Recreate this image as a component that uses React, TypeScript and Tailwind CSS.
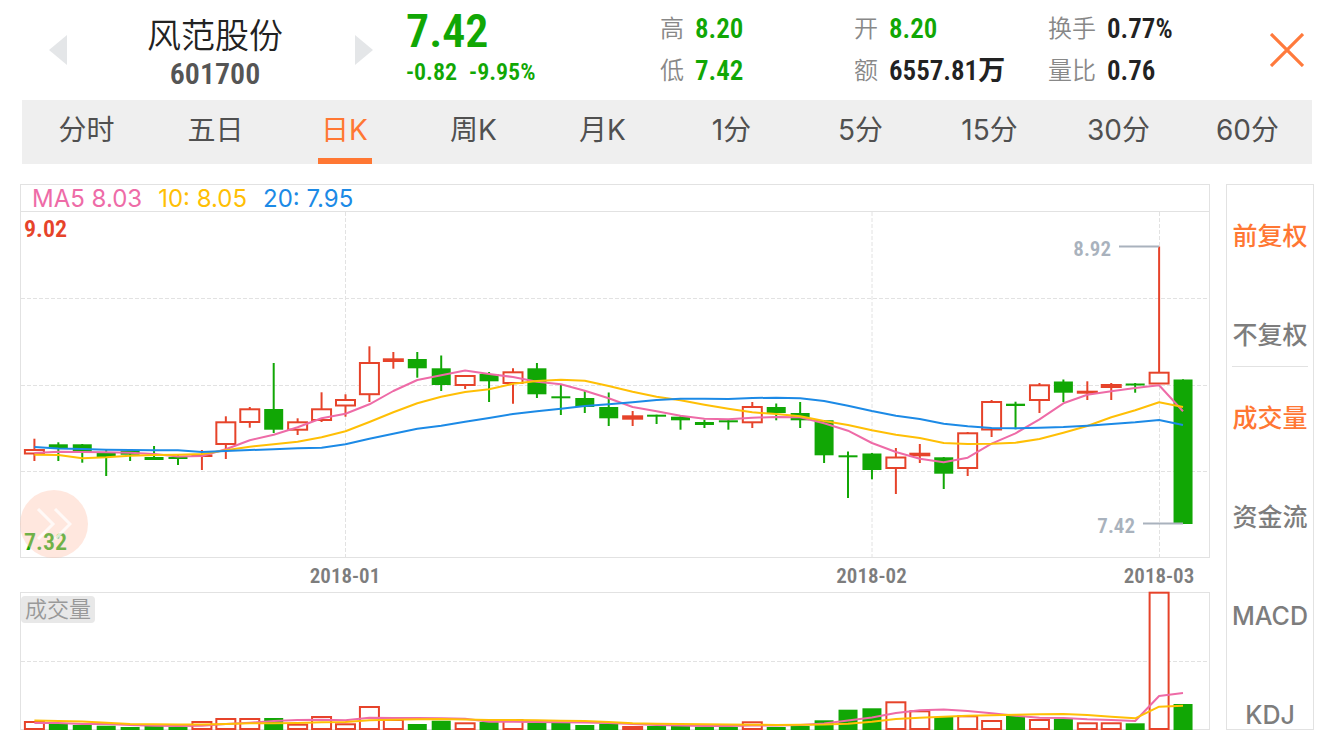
import { Fragment } from 'react';

type Kind = 'up' | 'down';

// kind, body top, body bottom, high, low, volume top
type Candle = [Kind, number, number, number, number, number];

const candles: Candle[] = [
  ['up', 449, 454.5, 438.7, 461, 721],
  ['down', 444.3, 448.3, 442.3, 461, 723.7],
  ['down', 444.3, 453, 444, 462.7, 725],
  ['down', 453, 457, 450, 476, 725.7],
  ['down', 450.7, 454.7, 450.7, 461, 727],
  ['down', 457, 460, 446, 460, 726],
  ['down', 457, 459, 455, 465, 727],
  ['up', 454.4, 457, 450, 470, 721],
  ['up', 421.3, 445, 416.3, 459, 718],
  ['up', 408.3, 423, 407, 427.7, 718],
  ['down', 409, 429.7, 363, 433, 718],
  ['up', 421.3, 430.7, 418.3, 435, 723.7],
  ['up', 408.3, 421, 392.3, 422, 716],
  ['up', 399, 406.5, 394.3, 416.7, 723.3],
  ['up', 362, 395.2, 346.3, 402, 706],
  ['up', 358.3, 362, 352, 368.7, 719],
  ['down', 359, 368.3, 352, 377.7, 724],
  ['down', 368.3, 385, 355.5, 391, 720.7],
  ['up', 375, 386, 375, 389, 722.3],
  ['down', 374, 381.3, 372, 402, 722],
  ['up', 371.3, 384, 368.3, 403.7, 719],
  ['down', 368.3, 394.3, 363, 398, 722.7],
  ['down', 396.3, 398.3, 385, 415, 722.7],
  ['down', 398, 407, 391, 413, 725],
  ['down', 407, 418.3, 392.5, 426, 723.7],
  ['up', 415.3, 419.7, 411, 426, 726],
  ['down', 414.7, 416.7, 414.7, 424, 726],
  ['down', 416.7, 420.3, 415, 429.7, 726],
  ['down', 422, 425, 419.7, 428, 726.7],
  ['down', 420.3, 422.3, 420, 429.7, 727],
  ['up', 406, 423.3, 402, 428, 721.3],
  ['down', 407, 413, 403.5, 420.3, 727],
  ['down', 413, 420.3, 402, 428, 726],
  ['down', 420.3, 455.3, 420, 463, 720.3],
  ['down', 455.3, 457.3, 451.5, 498, 709.7],
  ['down', 453.5, 470, 453, 479.3, 708.3],
  ['up', 456.5, 469, 448, 494, 701.3],
  ['up', 452.7, 456.3, 444, 463, 710.3],
  ['down', 457.3, 473.7, 457, 489, 717],
  ['up', 432.3, 469, 432, 476, 715.3],
  ['up', 401, 430.5, 400, 437, 720],
  ['down', 403.7, 406, 401.7, 429.3, 716],
  ['up', 384.3, 401, 383, 413, 719],
  ['down', 381.5, 392.7, 379.5, 402, 719],
  ['up', 390.7, 393.7, 381.3, 400, 722.3],
  ['up', 384, 388, 383, 400, 722.3],
  ['down', 383.5, 385.5, 383, 392.7, 723.3],
  ['up', 371.7, 384.5, 246.5, 384, 591.7],
  ['down', 379.5, 524, 379.3, 524, 704],
];

const ma5 = [
  453, 451.7, 452, 452.3, 452.7, 454, 456.5, 456, 449.3, 440.3, 434.7, 427.3, 418.3, 413.7, 404.3, 391, 380, 375.3,
  370.5, 374, 377, 381.7, 384.3, 390.7, 398.3, 407, 411.3, 415.7, 418.7, 419.3, 417.7, 417, 417.3, 423.3, 430.7, 443,
  452, 458.7, 462.3, 457.7, 443.7, 433.3, 419.3, 403.3, 394.7, 391.3, 388, 385.3, 411.3,
];
const ma10 = [
  454.7, 455, 458.3, 457.3, 455.7, 455, 454.7, 454, 450.3, 446.7, 444.3, 441.7, 437.3, 431.3, 422, 412.3, 403.3, 396.7,
  392, 389.3, 383.7, 381, 379.8, 380.7, 386, 391.7, 396.7, 400.3, 404.7, 408.7, 412.3, 414, 416.3, 421, 425, 430.3,
  434.7, 438, 443, 444, 443.7, 442.7, 439, 432.7, 426, 417.3, 410.3, 402.3, 407,
];
const ma20 = [
  446.9, 448.5, 449, 449.7, 450, 450.3, 450.3, 452, 451, 450, 449.3, 448.3, 447.7, 444.3, 438.7, 433.7, 428.7, 425.7,
  421.7, 418, 414, 411.3, 408.7, 406, 404.3, 402.3, 400, 398.7, 398.7, 399, 398, 397.7, 398.3, 401, 405.7, 411, 415.7,
  419, 423.7, 426.3, 428, 428.3, 427.7, 427, 425.7, 424, 422.3, 420, 425,
];
const volMa5 = [
  723, 723, 724, 724, 725, 725.7, 726, 725.7, 724, 722.7, 721, 720, 719.7, 720.3, 717.7, 718, 718, 718.3, 718.7, 721.7,
  721.7, 722, 722.2, 722.5, 723, 724, 725, 725.5, 726, 726, 725.5, 725.5, 725, 723.5, 720.5, 717.5, 713, 710.3, 709.5,
  711, 713.3, 715.7, 717.7, 718, 719.3, 720, 721, 696, 693,
];
const volMa10 = [
  720.5, 721, 721.5, 722.7, 724, 724.3, 724.5, 724.5, 724, 723.3, 723.3, 723, 722.3, 722, 720.3, 719.7, 719.3, 719,
  719.5, 720, 720, 720.3, 720.7, 721, 722, 723.3, 723.7, 724, 724.3, 724.5, 724.7, 725, 724.7, 724.5, 723.7, 721.7,
  719, 717.7, 716.7, 715.7, 715.3, 714.7, 714.3, 714, 715, 716.7, 718.3, 706.7, 705.7,
];

const RED = '#e6432a';
const GREEN = '#11a705';
const PINK = '#ee6ba7';
const YELLOW = '#ffbf05';
const BLUE = '#1c8ae6';
const GRID = '#e2e2e2';

const xAt = (i: number) => 34.4 + i * 23.93;
const toPoints = (ys: number[]) => ys.map((y, i) => `${xAt(i).toFixed(1)},${y}`).join(' ');

const months = [
  { x: 345.5, label: '2018-01' },
  { x: 872, label: '2018-02' },
  { x: 1159.5, label: '2018-03' },
];

function Bar({ x, kind, top, bottom }: { x: number; kind: Kind; top: number; bottom: number }) {
  if (kind === 'down') return <rect x={x - 9.5} y={top} width={19} height={bottom - top} fill={GREEN} />;
  if (bottom - top < 5) return <rect x={x - 10.5} y={top} width={21} height={bottom - top} fill={RED} />;
  return (
    <rect x={x - 9.5} y={top + 1} width={19} height={bottom - top - 2} fill="#fff" stroke={RED} strokeWidth={2} />
  );
}

function Line({ ys, color }: { ys: number[]; color: string }) {
  return <polyline points={toPoints(ys)} fill="none" stroke={color} strokeWidth={2} strokeLinejoin="round" />;
}

function PriceChart() {
  return (
    <svg viewBox="20 211 1190 381" className="block w-full overflow-visible" role="img" aria-label="日K">
      <rect x={20.5} y={211.5} width={1189} height={346} fill="none" stroke={GRID} />
      <g stroke={GRID} strokeDasharray="4 2">
        {[298.5, 385.5, 471.5].map((y) => (
          <line key={y} x1={21} x2={1209} y1={y} y2={y} />
        ))}
        {months.map((m) => (
          <line key={m.x} x1={m.x} x2={m.x} y1={212} y2={557} />
        ))}
      </g>
      {candles.map(([kind, top, bottom, high, low], i) => (
        <Fragment key={i}>
          <line x1={xAt(i)} x2={xAt(i)} y1={high} y2={low} stroke={kind === 'up' ? RED : GREEN} strokeWidth={2} />
          <Bar x={xAt(i)} kind={kind} top={top} bottom={bottom} />
        </Fragment>
      ))}
      <Line ys={ma5} color={PINK} />
      <Line ys={ma10} color={YELLOW} />
      <Line ys={ma20} color={BLUE} />
      <g stroke="#a9b2bd" strokeWidth={2}>
        <line x1={1119} x2={1159} y1={246.5} y2={246.5} />
        <line x1={1143} x2={1183} y1={523.5} y2={523.5} />
      </g>
      <g className="font-['Roboto_Condensed','Liberation_Sans',sans-serif] font-semibold">
        <g fill="#a9b2bd" fontSize={21} textAnchor="end">
          <text x={1111} y={256}>8.92</text>
          <text x={1135} y={533}>7.42</text>
        </g>
        <g fontSize={24}>
          <text x={24} y={237} fill={RED}>9.02</text>
          <text x={24} y={550} fill={GREEN}>7.32</text>
        </g>
        <g fill="#7d7d7d" fontSize={21} textAnchor="middle">
          {months.map((m) => (
            <text key={m.label} x={m.x - 0.5} y={583}>{m.label}</text>
          ))}
        </g>
      </g>
    </svg>
  );
}

function VolumeChart() {
  return (
    <svg viewBox="20 592 1190 138" className="block w-full overflow-visible" role="img" aria-label="成交量">
      <rect x={20.5} y={592.5} width={1189} height={137} fill="none" stroke={GRID} />
      <line x1={21} x2={1209} y1={661.5} y2={661.5} stroke={GRID} strokeDasharray="4 2" />
      {candles.map(([kind, , , , , top], i) =>
        kind === 'down' ? (
          <rect key={i} x={xAt(i) - 9.5} y={top} width={19} height={730 - top} fill={GREEN} />
        ) : (
          <rect
            key={i}
            x={xAt(i) - 9.5}
            y={top + 1}
            width={19}
            height={728 - top}
            fill="#fff"
            stroke={RED}
            strokeWidth={2}
          />
        ),
      )}
      <Line ys={volMa5} color={PINK} />
      <Line ys={volMa10} color={YELLOW} />
    </svg>
  );
}

type Stat = { label: string; value: string; color: string };

const stats: Stat[][] = [
  [
    { label: '高', value: '8.20', color: 'text-[#11a705]' },
    { label: '低', value: '7.42', color: 'text-[#11a705]' },
  ],
  [
    { label: '开', value: '8.20', color: 'text-[#11a705]' },
    { label: '额', value: '6557.81万', color: 'text-[#222]' },
  ],
  [
    { label: '换手', value: '0.77%', color: 'text-[#222]' },
    { label: '量比', value: '0.76', color: 'text-[#222]' },
  ],
];

const tabs = ['分时', '五日', '日K', '周K', '月K', '1分', '5分', '15分', '30分', '60分'];

function Header() {
  return (
    <header className="flex h-[100px] pl-[49px] pr-[30px]">
      <div className="flex w-[324px] justify-between">
        <button aria-label="上一个" className="self-center">
          <svg width="18" height="30" viewBox="0 0 18 30"><path d="M18 0v30L0 15z" fill="#e4e6e8" /></svg>
        </button>
        <div className="pt-4 pl-2 text-center">
          <h1 className="text-[34px] leading-10 font-[350] text-[#222]">风范股份</h1>
          <p className="font-['Roboto_Condensed','Liberation_Sans',sans-serif] text-[30px] leading-9 font-semibold text-[#555]">601700</p>
        </div>
        <button aria-label="下一个" className="self-center">
          <svg width="18" height="30" viewBox="0 0 18 30"><path d="M0 0v30l18-15z" fill="#e4e6e8" /></svg>
        </button>
      </div>
      <div className="ml-[33px] w-[254px] pt-1 font-['Roboto_Condensed','Liberation_Sans',sans-serif] font-semibold text-[#11a705]">
        <p className="text-[46px] leading-[54px]">7.42</p>
        <p className="flex gap-3 text-[24px] leading-7">
          <span>-0.82</span>
          <span>-9.95%</span>
        </p>
      </div>
      <div className="flex flex-1">
        {stats.map((col, c) => (
          <dl
            key={c}
            className="grid w-[194px] grid-cols-[auto_1fr] content-start gap-x-[11px] pt-2 text-[27px] leading-[42px]"
          >
            {col.map((s) => (
              <Fragment key={s.label}>
                <dt className="text-[24px] font-[350] text-[#888]">{s.label}</dt>
                <dd className={`font-['Roboto_Condensed','Noto_Sans_CJK_SC',sans-serif] font-semibold ${s.color}`}>{s.value}</dd>
              </Fragment>
            ))}
          </dl>
        ))}
      </div>
      <button aria-label="关闭" className="self-center">
        <svg width="34" height="34" viewBox="0 0 34 34" stroke="#ff7a3c" strokeWidth="3.2">
          <path d="M1 1l32 32M33 1L1 33" />
        </svg>
      </button>
    </header>
  );
}

function SideItem({ label, active }: { label: string; active?: boolean }) {
  return (
    <button className={`block h-7 w-full whitespace-nowrap ${active ? 'text-[#ff7733]' : 'text-[#7d7d7d]'}`}>
      {label}
    </button>
  );
}

export default function App() {
  return (
    <div className="min-h-[750px] bg-white pb-5 font-[Inter,'Noto_Sans_CJK_SC',sans-serif]">
      <Header />
      <nav className="mx-[22px] flex h-16 bg-[#efefef]">
        {tabs.map((t) => (
          <button
            key={t}
            className={`flex flex-1 flex-col items-center justify-between pt-2 text-[28px] leading-[44px] ${
              t === '日K' ? 'text-[#ff7733]' : 'text-[#505050]'
            }`}
          >
            <span>{t}</span>
            {t === '日K' && <span className="h-1.5 w-[54px] bg-[#ff7733]" />}
          </button>
        ))}
      </nav>
      <main className="flex gap-4 px-5 pt-5">
        <section className="min-w-0 flex-1">
          <div className="flex h-[27px] gap-4 border border-b-0 border-[#e2e2e2] px-[11px] text-[24px] leading-7">
            <span className="text-[#ee6ba7]">MA5 8.03</span>
            <span className="text-[#ffbf05]">10: 8.05</span>
            <span className="text-[#1c8ae6]">20: 7.95</span>
          </div>
          <div className="relative">
            <PriceChart />
            <button
              aria-label="展开"
              className="absolute bottom-[34px] left-0 flex size-[68px] items-center justify-center rounded-full bg-[#ffc4ac]/40"
            >
              <svg width="36" height="32" viewBox="0 0 36 32" fill="none" stroke="#fff" strokeOpacity="0.75" strokeWidth="3">
                <path d="M2 1l15 15L2 31M19 1l15 15L19 31" />
              </svg>
            </button>
          </div>
          <div className="relative">
            <VolumeChart />
            <span className="absolute top-1 left-px rounded bg-[#e8e8e8] px-1 text-[22px] leading-[27px] font-[350] text-[#999]">
              成交量
            </span>
          </div>
        </section>
        <aside className="w-[88px] border border-[#e2e2e2] px-[5px] text-[25px] leading-7 font-medium">
          <div className="space-y-[71px] border-b border-[#e2e2e2] pt-[37px] pb-[17px]">
            <SideItem label="前复权" active />
            <SideItem label="不复权" />
          </div>
          <div className="space-y-[71px] pt-[37px]">
            <SideItem label="成交量" active />
            <SideItem label="资金流" />
            <SideItem label="MACD" />
            <SideItem label="KDJ" />
          </div>
        </aside>
      </main>
    </div>
  );
}
